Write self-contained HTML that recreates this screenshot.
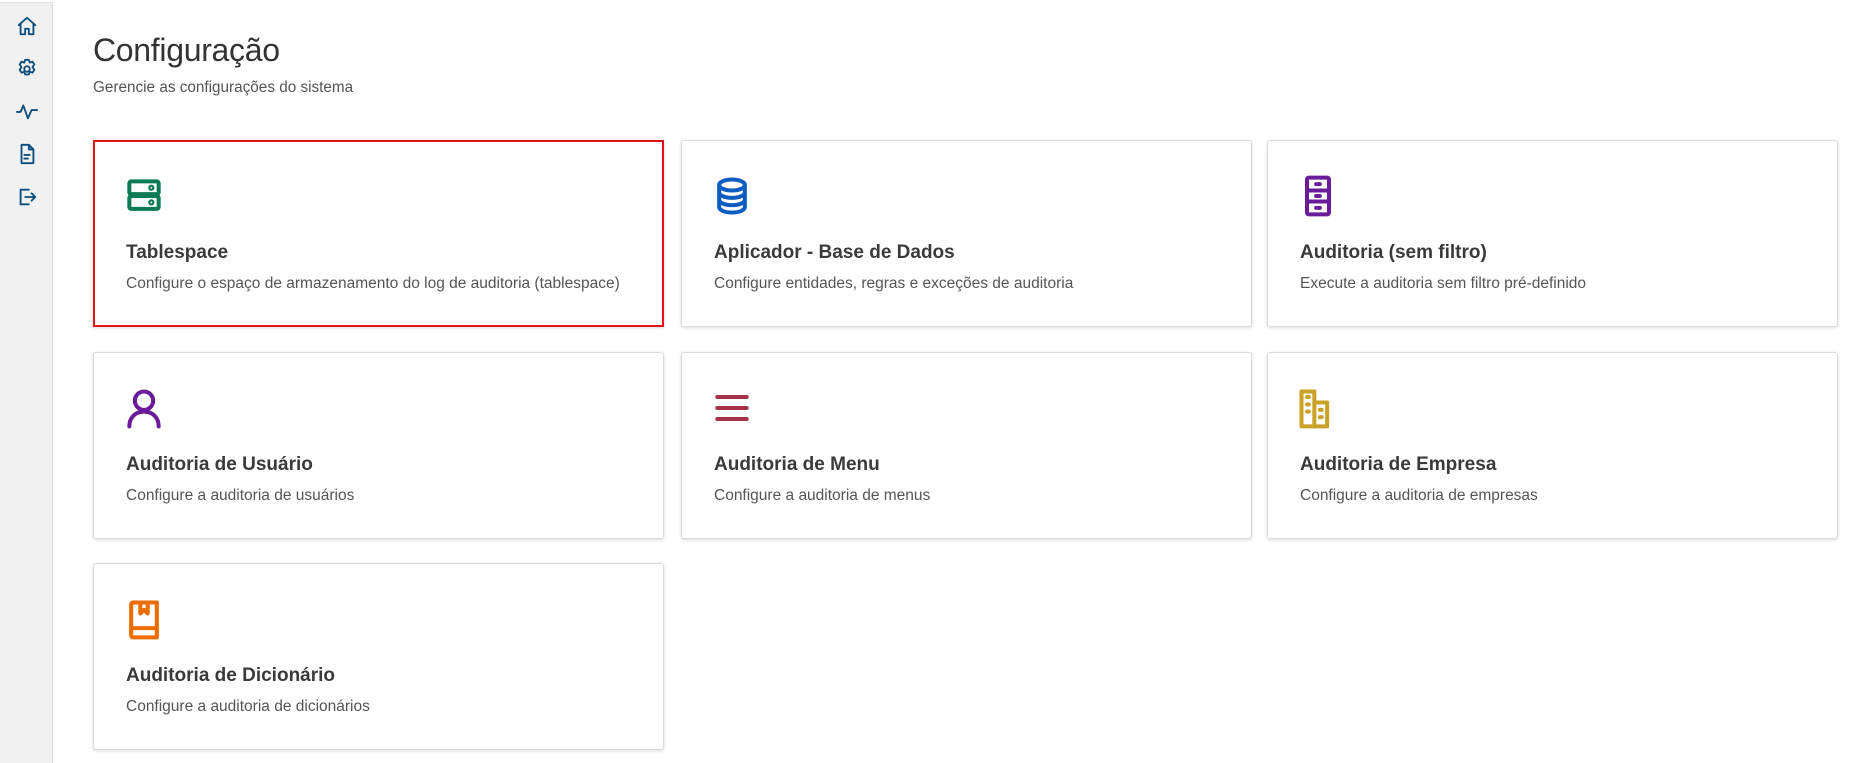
<!DOCTYPE html>
<html><head><meta charset="utf-8"><style>
*{box-sizing:border-box;margin:0;padding:0}
body{width:1851px;height:763px;background:#fff;font-family:"Liberation Sans",sans-serif;position:relative;overflow:hidden}
.side{position:absolute;left:0;top:2px;width:53px;height:761px;background:#f1f1f1;border-right:1px solid #dcdcdc;border-top:1px solid #e4e4e4}
.side svg{position:absolute;left:16px;width:22px;height:22px;fill:none;stroke:#0b4d7c;stroke-width:2;stroke-linecap:round;stroke-linejoin:round}
h1{position:absolute;left:93px;top:32px;font-size:32px;font-weight:normal;color:#333;letter-spacing:-0.3px}
.sub{position:absolute;left:93px;top:79px;font-size:15.3px;color:#555}
.card{position:absolute;width:571px;height:187px;background:#fff;border:1px solid #dcdcdc;border-radius:3px;box-shadow:0 1px 3px rgba(0,0,0,.15)}
.card.sel{border:2px solid #e8111b;border-radius:0}
.card svg{position:absolute;left:28px;top:33px;width:44px;height:44px;fill:none;stroke-width:2.2;stroke-linecap:round;stroke-linejoin:round}
.card .t{position:absolute;left:32px;top:101px;font-size:19px;font-weight:bold;color:#3a3a3a}
.card .d{position:absolute;left:32px;top:134px;font-size:15.5px;color:#555}
.sel svg{left:27px;top:32px}.sel .t{left:31px;top:100px}.sel .d{left:31px;top:133px}
</style></head><body>
<div class="side">
<svg style="top:12px" viewBox="0 0 24 24"><path d="M3 11l9-8 9 8M5 9v12h5v-6h4v6h5V9"/></svg>
<svg style="top:55px" viewBox="0 0 24 24"><circle cx="12" cy="12" r="3"/><path d="M10 2h4l1 3 3-1 2 3-2 3 2 3-2 3-3-1-1 3h-4l-1-3-3 1-2-3 2-3-2-3 2-3 3 1z"/></svg>
<svg style="top:97px" viewBox="0 0 24 24"><path d="M1 13h4l3-7 5 14 4-9h6"/></svg>
<svg style="top:140px" viewBox="0 0 24 24"><path d="M6 2h8l5 5v15H6zM14 2v5h5M9 13h6M9 17h4"/></svg>
<svg style="top:183px" viewBox="0 0 24 24"><path d="M14 4H5v16h9M10 12h11M17 8l4 4-4 4"/></svg>
</div>
<h1>Configuração</h1>
<div class="sub">Gerencie as configurações do sistema</div>

<div class="card sel" style="left:93px;top:140px"><svg viewBox="0 0 24 24" stroke="#0c7a55"><rect x="4" y="4" width="16" height="7" rx="1"/><rect x="4" y="12" width="16" height="7" rx="1"/><circle cx="16" cy="7.5" r=".6"/><circle cx="16" cy="15.5" r=".6"/></svg><div class="t">Tablespace</div><div class="d">Configure o espaço de armazenamento do log de auditoria (tablespace)</div></div>
<div class="card" style="left:681px;top:140px"><svg viewBox="0 0 24 24" stroke="#0d5cc0"><ellipse cx="12" cy="6" rx="7" ry="3"/><path d="M5 6v12c0 1.7 3 3 7 3s7-1.3 7-3V6M5 10c0 1.7 3 3 7 3s7-1.3 7-3M5 14c0 1.7 3 3 7 3s7-1.3 7-3"/></svg><div class="t">Aplicador - Base de Dados</div><div class="d">Configure entidades, regras e exceções de auditoria</div></div>
<div class="card" style="left:1267px;top:140px"><svg viewBox="0 0 24 24" stroke="#6a1b9a"><rect x="6" y="2" width="12" height="20" rx="1"/><path d="M6 9h12M6 15h12M11 5.5h2M11 12h2M11 18.5h2"/></svg><div class="t">Auditoria (sem filtro)</div><div class="d">Execute a auditoria sem filtro pré-definido</div></div>

<div class="card" style="left:93px;top:352px"><svg viewBox="0 0 24 24" stroke="#6a1b9a"><circle cx="12" cy="8" r="5"/><path d="M4 22c0-5 3.5-8 8-8s8 3 8 8"/></svg><div class="t">Auditoria de Usuário</div><div class="d">Configure a auditoria de usuários</div></div>
<div class="card" style="left:681px;top:352px"><svg viewBox="0 0 24 24" stroke="#a3324a"><path d="M4 6h16M4 12h16M4 18h16"/></svg><div class="t">Auditoria de Menu</div><div class="d">Configure a auditoria de menus</div></div>
<div class="card" style="left:1267px;top:352px"><svg viewBox="0 0 24 24" stroke="#c9a227"><path d="M3 22V3h7v19zM10 9h7v13h-7M3 22h14M6 6h1M6 10h1M6 14h1M13 13h1M13 17h1"/></svg><div class="t">Auditoria de Empresa</div><div class="d">Configure a auditoria de empresas</div></div>

<div class="card" style="left:93px;top:563px"><svg viewBox="0 0 24 24" stroke="#ef6c00"><path d="M5 19V4a1 1 0 011-1h13v19H6a1 1 0 01-1-1zM5 17h14M10 3v6l2-2 2 2V3"/></svg><div class="t">Auditoria de Dicionário</div><div class="d">Configure a auditoria de dicionários</div></div>
</body></html>
